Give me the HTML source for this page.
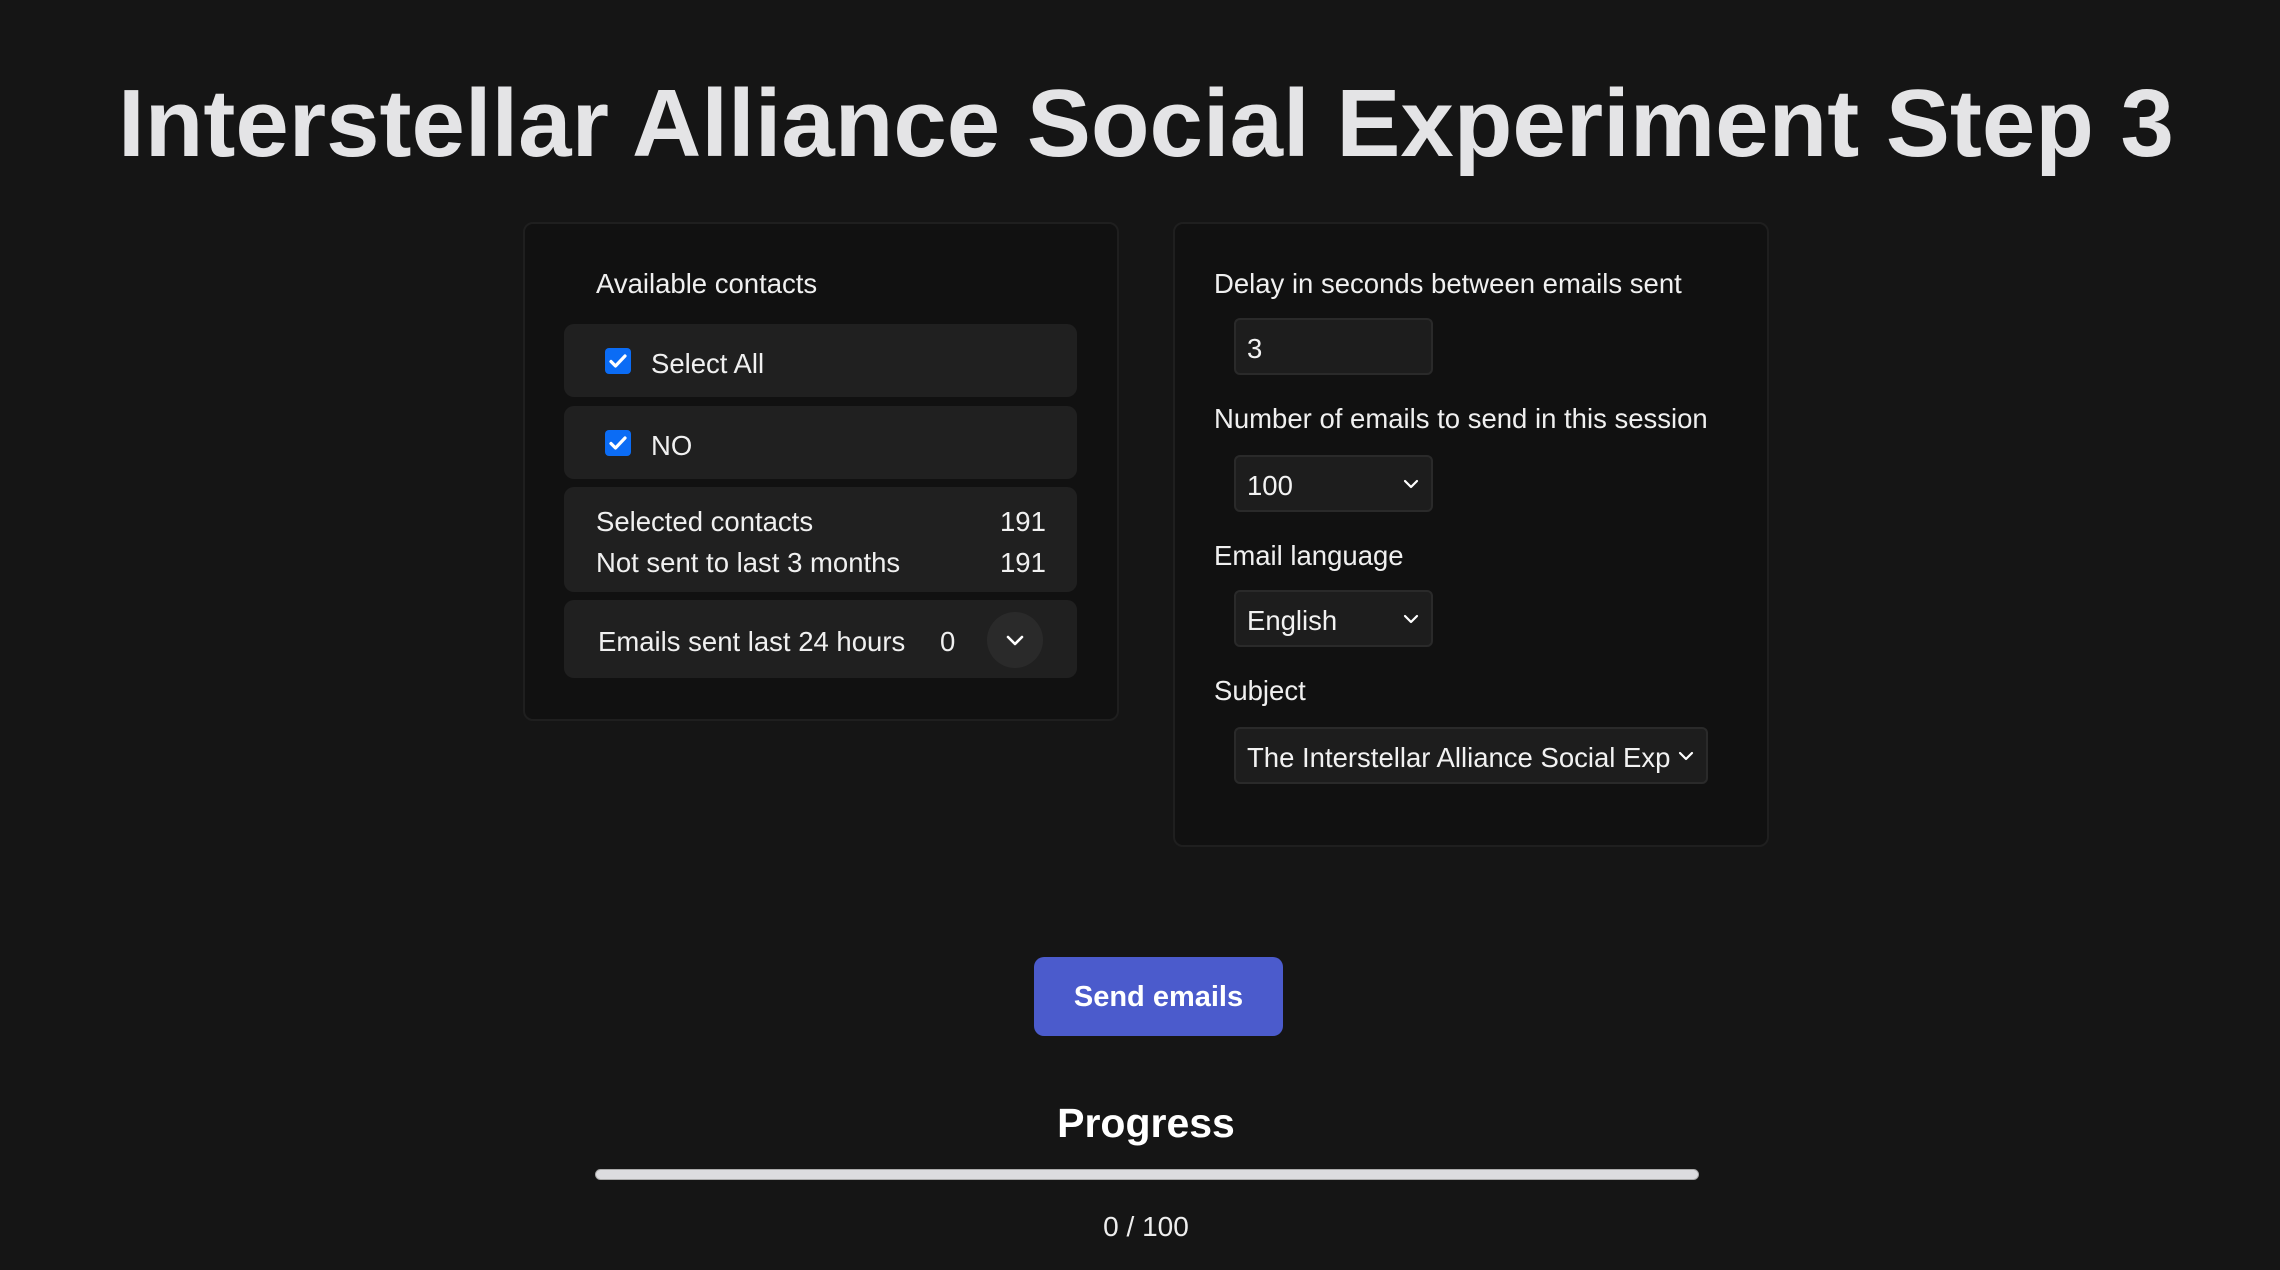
<!DOCTYPE html>
<html><head><meta charset="utf-8"><style>
*{box-sizing:border-box;margin:0;padding:0}
body{width:2280px;height:1270px;background:#151515;color:#eaeaea;font-family:"Liberation Sans",Arial,sans-serif;position:relative;overflow:hidden}
.abs{position:absolute}
h1{position:absolute;left:0;width:2292px;text-align:center;top:69px;font-size:96px;font-weight:bold;color:#e4e4e6;line-height:110px;white-space:nowrap}
.card{position:absolute;background:#111;border:2px solid #1f1f1f;border-radius:10px}
.row{position:absolute;left:564px;width:513px;background:#202020;border-radius:10px}
.t{position:absolute;font-size:27.5px;line-height:32px;white-space:nowrap;color:#f0f0f0;margin-top:1.5px}
.cb{position:absolute;width:26px;height:26px;background:#0b6cf5;border-radius:4px}
.field{position:absolute;background:#1d1d1d;border:2px solid #2a2a2a;border-radius:6px}
.field span{position:absolute;left:11px;top:13px;font-size:27.5px;line-height:32px;color:#f2f2f2;white-space:nowrap}
.chev{position:absolute;right:12px;top:21px}
</style></head><body>
<h1>Interstellar Alliance Social Experiment Step 3</h1>

<div class="card" style="left:523px;top:222px;width:596px;height:499px"></div>
<div class="t" style="left:596px;top:266px">Available contacts</div>
<div class="row" style="top:324px;height:73px"></div>
<div class="cb" style="left:605px;top:348px"></div>
<svg class="abs" style="left:605px;top:348px" width="26" height="26" viewBox="0 0 26 26"><path d="M6 13.5l4.5 4.5L20 8" fill="none" stroke="#fff" stroke-width="3.2" stroke-linecap="round" stroke-linejoin="round"/></svg>
<div class="t" style="left:651px;top:346px">Select All</div>
<div class="row" style="top:406px;height:73px"></div>
<div class="cb" style="left:605px;top:430px"></div>
<svg class="abs" style="left:605px;top:430px" width="26" height="26" viewBox="0 0 26 26"><path d="M6 13.5l4.5 4.5L20 8" fill="none" stroke="#fff" stroke-width="3.2" stroke-linecap="round" stroke-linejoin="round"/></svg>
<div class="t" style="left:651px;top:428px">NO</div>
<div class="row" style="top:487px;height:105px"></div>
<div class="t" style="left:596px;top:504px">Selected contacts</div>
<div class="t" style="left:1000px;top:504px">191</div>
<div class="t" style="left:596px;top:545px">Not sent to last 3 months</div>
<div class="t" style="left:1000px;top:545px">191</div>
<div class="row" style="top:600px;height:78px"></div>
<div class="t" style="left:598px;top:624px">Emails sent last 24 hours</div>
<div class="t" style="left:940px;top:624px">0</div>
<div class="abs" style="left:987px;top:612px;width:56px;height:56px;border-radius:50%;background:#2a2a2a"></div>
<svg class="abs" style="left:1005px;top:633px" width="20" height="14" viewBox="0 0 20 14"><path d="M3 4l7 7 7-7" fill="none" stroke="#fff" stroke-width="2.6" stroke-linecap="round" stroke-linejoin="round"/></svg>

<div class="card" style="left:1173px;top:222px;width:596px;height:625px"></div>
<div class="t" style="left:1214px;top:266px">Delay in seconds between emails sent</div>
<div class="field" style="left:1234px;top:318px;width:199px;height:57px"><span>3</span></div>
<div class="t" style="left:1214px;top:401px">Number of emails to send in this session</div>
<div class="field" style="left:1234px;top:455px;width:199px;height:57px"><span>100</span><svg class="chev" width="16" height="12" viewBox="0 0 16 12"><path d="M2 3l6 6 6-6" fill="none" stroke="#fff" stroke-width="2.2" stroke-linecap="round" stroke-linejoin="round"/></svg></div>
<div class="t" style="left:1214px;top:538px">Email language</div>
<div class="field" style="left:1234px;top:590px;width:199px;height:57px"><span>English</span><svg class="chev" width="16" height="12" viewBox="0 0 16 12"><path d="M2 3l6 6 6-6" fill="none" stroke="#fff" stroke-width="2.2" stroke-linecap="round" stroke-linejoin="round"/></svg></div>
<div class="t" style="left:1214px;top:673px">Subject</div>
<div class="field" style="left:1234px;top:727px;width:474px;height:57px;overflow:hidden"><span style="width:424px;overflow:hidden">The Interstellar Alliance Social Experiment</span><svg class="chev" width="16" height="12" viewBox="0 0 16 12"><path d="M2 3l6 6 6-6" fill="none" stroke="#fff" stroke-width="2.2" stroke-linecap="round" stroke-linejoin="round"/></svg></div>

<div class="abs" style="left:1034px;top:957px;width:249px;height:79px;background:#4b5bcc;border-radius:10px;color:#fff;font-weight:bold;font-size:29px;line-height:81px;text-align:center">Send emails</div>
<div class="abs" style="left:0;width:2292px;top:1098px;text-align:center;font-weight:bold;font-size:41px;line-height:50px;color:#fff">Progress</div>
<div class="abs" style="left:595px;top:1169px;width:1104px;height:11px;background:#dcdcdf;border:1px solid #aaa;border-radius:6px"></div>
<div class="abs" style="left:0;width:2292px;top:1211px;text-align:center;font-size:28px;line-height:32px;color:#eee">0 / 100</div>
</body></html>
